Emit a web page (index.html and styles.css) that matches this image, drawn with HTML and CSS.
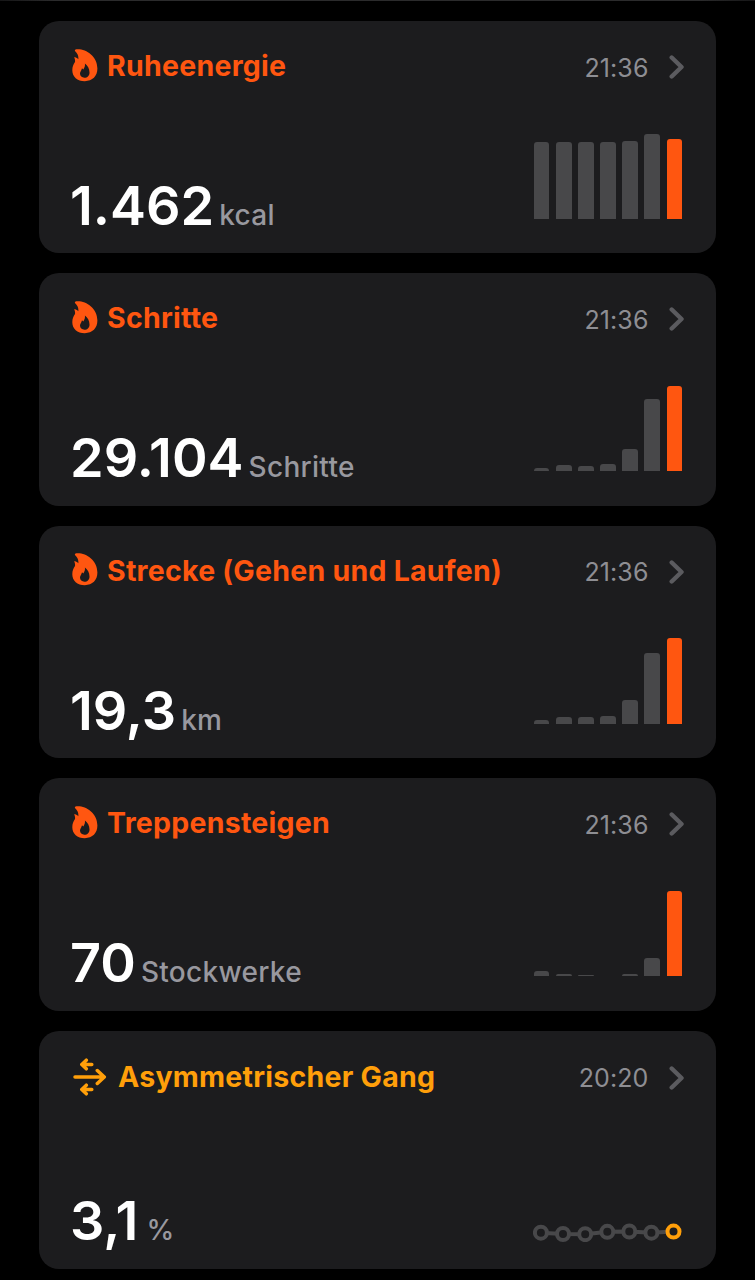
FILE: index.html
```html
<!DOCTYPE html>
<html lang="de">
<head>
    <meta charset="UTF-8">
    <meta name="viewport" content="width=device-width, initial-scale=1.0">
    <title>Aktivität</title>
    <link rel="stylesheet" href="styles.css">
</head>
<body>
    <svg class="symbols" aria-hidden="true">
        <symbol id="flame" viewBox="0 0 26 33">
            <path fill-rule="evenodd" d="M4.3 .3C13.600 -.6 25.400 6.800 25.400 19.600C25.400 27.200 20.400 32.200 12.800 32.200C5.200 32.200 .3 27.600 .3 21.200C.3 17.600 1.400 15.200 3 12.900C3.300 11.600 2.800 9.600 2.100 8.300C3.600 8.300 5 8.900 6.300 10.200C6.800 7.400 5.400 4.200 3.200 2.300C2.500 1.400 3 .4 4.300 .3ZM12.900 14.600C13.300 17.600 12.300 18.800 11.300 20.600C10.900 20.100 10.500 19.600 9.800 19.300C9.900 21.400 8 22.200 8 24.600C8 27.200 9.900 28.700 12.400 28.700C15.500 28.700 17.500 26.600 17.500 23.400C17.500 19.700 15.600 16.500 12.900 14.600Z"/>
        </symbol>
        <symbol id="gait" viewBox="0 0 34 38">
            <path d="M2 19H31M24.300 12.500L31.300 19L24.300 25.500M9.200 6.500H18.800M13.300 2.200L8.800 6.500L13.300 10.800M9.200 31.500H18.800M13.300 27.200L8.800 31.500L13.300 35.800"/>
        </symbol>
        <symbol id="chevron" viewBox="0 0 16 24">
            <path d="M2.700 2.500L12.500 12L2.700 21.500"/>
        </symbol>
    </svg>

    <div class="previous-card"></div>

    <main>
        <section class="card">
            <header>
                <svg class="flame"><use href="#flame"/></svg>
                <h2>Ruheenergie</h2>
                <time>21:36</time>
                <svg class="chevron"><use href="#chevron"/></svg>
            </header>
            <div class="content">
                <p><span class="value">1.462</span><span class="unit">kcal</span></p>
                <div class="bars">
                    <i style="height: 77px"></i>
                    <i style="height: 77px"></i>
                    <i style="height: 77px"></i>
                    <i style="height: 77px"></i>
                    <i style="height: 78.500px"></i>
                    <i style="height: 85.300px"></i>
                    <i style="height: 79.700px"></i>
                </div>
            </div>
        </section>

        <section class="card">
            <header>
                <svg class="flame"><use href="#flame"/></svg>
                <h2>Schritte</h2>
                <time>21:36</time>
                <svg class="chevron"><use href="#chevron"/></svg>
            </header>
            <div class="content">
                <p><span class="value">29.104</span><span class="unit">Schritte</span></p>
                <div class="bars">
                    <i style="height: 3px"></i>
                    <i style="height: 6.300px"></i>
                    <i style="height: 5.800px"></i>
                    <i style="height: 7px"></i>
                    <i style="height: 22px"></i>
                    <i style="height: 72.300px"></i>
                    <i style="height: 85.300px"></i>
                </div>
            </div>
        </section>

        <section class="card">
            <header>
                <svg class="flame"><use href="#flame"/></svg>
                <h2>Strecke (Gehen und Laufen)</h2>
                <time>21:36</time>
                <svg class="chevron"><use href="#chevron"/></svg>
            </header>
            <div class="content">
                <p><span class="value">19,3</span><span class="unit">km</span></p>
                <div class="bars">
                    <i style="height: 3.500px"></i>
                    <i style="height: 6.700px"></i>
                    <i style="height: 6.700px"></i>
                    <i style="height: 7.700px"></i>
                    <i style="height: 23.500px"></i>
                    <i style="height: 71px"></i>
                    <i style="height: 85.300px"></i>
                </div>
            </div>
        </section>

        <section class="card">
            <header>
                <svg class="flame"><use href="#flame"/></svg>
                <h2>Treppensteigen</h2>
                <time>21:36</time>
                <svg class="chevron"><use href="#chevron"/></svg>
            </header>
            <div class="content">
                <p><span class="value">70</span><span class="unit">Stockwerke</span></p>
                <div class="bars">
                    <i style="height: 5px"></i>
                    <i style="height: 2.600px"></i>
                    <i style="height: 1.300px"></i>
                    <i style="height: 0"></i>
                    <i style="height: 2.600px"></i>
                    <i style="height: 18px"></i>
                    <i style="height: 85.300px"></i>
                </div>
            </div>
        </section>

        <section class="card mobility">
            <header>
                <svg class="gait"><use href="#gait"/></svg>
                <h2>Asymmetrischer Gang</h2>
                <time>20:20</time>
                <svg class="chevron"><use href="#chevron"/></svg>
            </header>
            <div class="content">
                <p><span class="value">3,1</span><span class="unit">%</span></p>
                <svg class="line-chart" viewBox="0 0 149 20">
                    <polyline points="7.900,10.700 30,12 52.200,12.200 74.300,9.800 96.300,9.600 118.400,10.700 140.500,9.600"/>
                    <circle cx="7.900" cy="10.700" r="6"/>
                    <circle cx="30" cy="12" r="6"/>
                    <circle cx="52.200" cy="12.200" r="6"/>
                    <circle cx="74.300" cy="9.800" r="6"/>
                    <circle cx="96.300" cy="9.500" r="6"/>
                    <circle cx="118.400" cy="10.700" r="6"/>
                    <circle class="today" cx="140.500" cy="9.600" r="6"/>
                </svg>
            </div>
        </section>
    </main>
</body>
</html>
```

FILE: styles.css
```css
body {
    font-family: Inter, sans-serif;
    margin: 0;
    background: #000;
    color: #fff;
    overflow: hidden;
}

.symbols {
    display: none;
}

.previous-card {
    height: 1px;
    margin-bottom: 20px;
    background: linear-gradient(90deg, #161617, #2b2b2c 55px, #2b2b2c 700px, #161617);
}

main {
    display: flex;
    flex-direction: column;
    gap: 20px;
    padding: 0 39px;
}

.card {
    --accent: #ff5610;
    box-sizing: border-box;
    height: 232.400px;
    padding: 27px 31.500px 0 32px;
    border-radius: 20px;
    background: #1c1c1e;
}

.card header {
    display: flex;
    align-items: center;
    height: 36px;
    color: var(--accent);
}

.flame {
    width: 26px;
    height: 33px;
    margin: 0 9px 2px 1px;
    fill: currentColor;
}

.gait {
    width: 34px;
    height: 38px;
    margin: 0 11px 0 2px;
    fill: none;
    stroke: currentColor;
    stroke-width: 3.500px;
    stroke-linecap: round;
    stroke-linejoin: round;
}

h2 {
    margin: 0;
    font-size: 28.500px;
    font-weight: 650;
    line-height: 36px;
    letter-spacing: .25px;
    white-space: nowrap;
}

time {
    margin-left: auto;
    padding-top: 3px;
    font-size: 25px;
    line-height: 36px;
    letter-spacing: .1px;
    color: #8e8e93;
}

.chevron {
    width: 16px;
    height: 24px;
    margin: 2px 0 0 20px;
    fill: none;
    stroke: #5b5b5f;
    stroke-width: 4.400px;
    stroke-linecap: round;
    stroke-linejoin: round;
}

.content {
    display: flex;
    justify-content: space-between;
    align-items: flex-end;
    height: 135px;
}

.content p {
    display: flex;
    align-items: baseline;
    margin: 0 0 -28px -1px;
    line-height: 64px;
}

.value {
    font-size: 54px;
    font-weight: 600;
}

.unit {
    margin-left: 5px;
    font-size: 28px;
    font-weight: 550;
    letter-spacing: .3px;
    color: #98989f;
}

.bars {
    display: flex;
    align-items: flex-end;
    gap: 6.600px;
    margin-right: 2.500px;
}

.bars i {
    width: 15.500px;
    border-radius: 3px 3px 0 0;
    background: #48484a;
}

.bars i:last-child {
    background: var(--accent);
}

.mobility {
    --accent: #ff9f0a;
    height: 238px;
}

.mobility header {
    padding-top: 1px;
}

.mobility .content {
    height: 147px;
}

.mobility p {
    margin-bottom: -20px;
}

.mobility .unit {
    margin-left: 8px;
    font-weight: 500;
}

.line-chart {
    width: 149px;
    height: 20px;
    margin-right: 2.500px;
    fill: none;
    stroke: #48484a;
    stroke-width: 4px;
}

.line-chart circle {
    fill: #1c1c1e;
}

.line-chart .today {
    stroke: var(--accent);
}
```
